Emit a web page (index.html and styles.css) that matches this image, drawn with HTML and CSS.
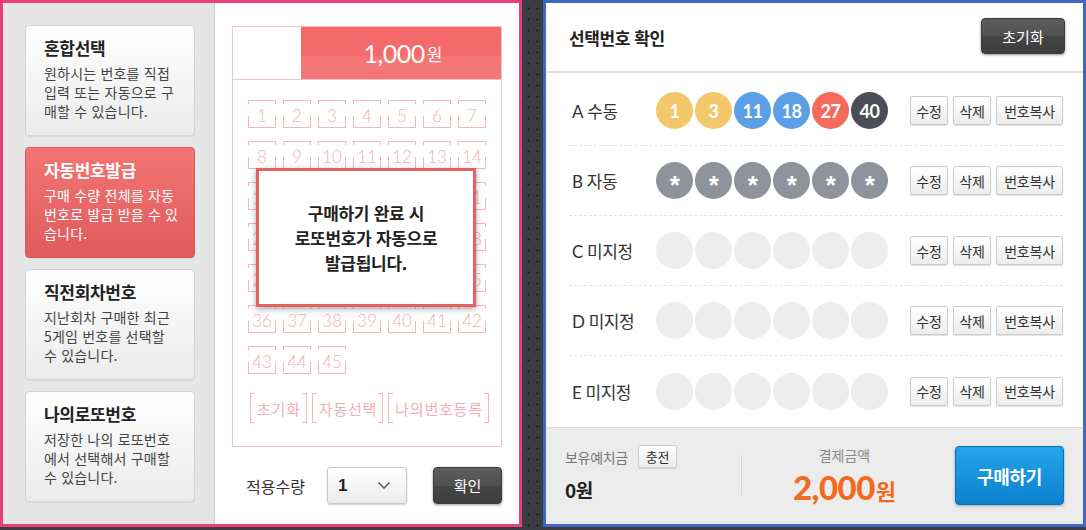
FILE: index.html
```html
<!DOCTYPE html>
<html lang="ko">
<head>
<meta charset="utf-8">
<link rel="stylesheet" href="styles.css">
</head>
<body>
<section class="left">
  <aside class="side">
    <div class="card">
      <h3>혼합선택</h3>
      <p>원하시는 번호를 직접<br>입력 또는 자동으로 구<br>매할 수 있습니다.</p>
    </div>
    <div class="card active">
      <h3>자동번호발급</h3>
      <p>구매 수량 전체를 자동<br>번호로 발급 받을 수 있<br>습니다.</p>
    </div>
    <div class="card">
      <h3>직전회차번호</h3>
      <p>지난회차 구매한 최근<br>5게임 번호를 선택할<br>수 있습니다.</p>
    </div>
    <div class="card">
      <h3>나의로또번호</h3>
      <p>저장한 나의 로또번호<br>에서 선택해서 구매할<br>수 있습니다.</p>
    </div>
  </aside>
  <div class="main">
    <div class="slip">
      <div class="slip-head">
        <div class="slip-blank"></div>
        <div class="price"><span class="pnum">1,000</span><span class="pwon">원</span></div>
      </div>
      <div class="grid">
        <span class="cell">1</span><span class="cell">2</span><span class="cell">3</span><span class="cell">4</span><span class="cell">5</span><span class="cell">6</span><span class="cell">7</span>
        <span class="cell">8</span><span class="cell">9</span><span class="cell">10</span><span class="cell">11</span><span class="cell">12</span><span class="cell">13</span><span class="cell">14</span>
        <span class="cell">15</span><span class="cell">16</span><span class="cell">17</span><span class="cell">18</span><span class="cell">19</span><span class="cell">20</span><span class="cell">21</span>
        <span class="cell">22</span><span class="cell">23</span><span class="cell">24</span><span class="cell">25</span><span class="cell">26</span><span class="cell">27</span><span class="cell">28</span>
        <span class="cell">29</span><span class="cell">30</span><span class="cell">31</span><span class="cell">32</span><span class="cell">33</span><span class="cell">34</span><span class="cell">35</span>
        <span class="cell">36</span><span class="cell">37</span><span class="cell">38</span><span class="cell">39</span><span class="cell">40</span><span class="cell">41</span><span class="cell">42</span>
        <span class="cell">43</span><span class="cell">44</span><span class="cell">45</span>
      </div>
      <div class="slip-btns">
        <span class="bk">초기화</span><span class="bk">자동선택</span><span class="bk">나의번호등록</span>
      </div>
      <div class="notice">구매하기 완료 시<br>로또번호가 자동으로<br>발급됩니다.</div>
    </div>
    <div class="qty">
      <span class="qty-label">적용수량</span>
      <div class="select"><span>1</span>
        <svg width="14" height="9" viewBox="0 0 14 9"><polyline points="1.5,1.5 7,7 12.5,1.5" fill="none" stroke="#666" stroke-width="1.6"/></svg>
      </div>
      <button class="dark-btn ok">확인</button>
    </div>
  </div>
</section>

<section class="right">
  <header class="rhead">
    <h2>선택번호 확인</h2>
    <button class="dark-btn reset">초기화</button>
  </header>
  <div class="rows">
    <div class="row">
      <span class="lbl"><b>A</b> 수동</span>
      <div class="balls">
        <span class="ball y">1</span><span class="ball y">3</span><span class="ball b">11</span><span class="ball b">18</span><span class="ball r">27</span><span class="ball k">40</span>
      </div>
      <div class="acts"><button class="sbtn">수정</button><button class="sbtn">삭제</button><button class="sbtn wide">번호복사</button></div>
    </div>
    <div class="row">
      <span class="lbl"><b>B</b> 자동</span>
      <div class="balls">
        <span class="ball s">*</span><span class="ball s">*</span><span class="ball s">*</span><span class="ball s">*</span><span class="ball s">*</span><span class="ball s">*</span>
      </div>
      <div class="acts"><button class="sbtn">수정</button><button class="sbtn">삭제</button><button class="sbtn wide">번호복사</button></div>
    </div>
    <div class="row">
      <span class="lbl"><b>C</b> 미지정</span>
      <div class="balls">
        <span class="ball e"></span><span class="ball e"></span><span class="ball e"></span><span class="ball e"></span><span class="ball e"></span><span class="ball e"></span>
      </div>
      <div class="acts"><button class="sbtn">수정</button><button class="sbtn">삭제</button><button class="sbtn wide">번호복사</button></div>
    </div>
    <div class="row">
      <span class="lbl"><b>D</b> 미지정</span>
      <div class="balls">
        <span class="ball e"></span><span class="ball e"></span><span class="ball e"></span><span class="ball e"></span><span class="ball e"></span><span class="ball e"></span>
      </div>
      <div class="acts"><button class="sbtn">수정</button><button class="sbtn">삭제</button><button class="sbtn wide">번호복사</button></div>
    </div>
    <div class="row last">
      <span class="lbl"><b>E</b> 미지정</span>
      <div class="balls">
        <span class="ball e"></span><span class="ball e"></span><span class="ball e"></span><span class="ball e"></span><span class="ball e"></span><span class="ball e"></span>
      </div>
      <div class="acts"><button class="sbtn">수정</button><button class="sbtn">삭제</button><button class="sbtn wide">번호복사</button></div>
    </div>
  </div>
  <footer class="rfoot">
    <div class="deposit">
      <div class="dep-top"><span class="dep-label">보유예치금</span><button class="sbtn charge">충전</button></div>
      <div class="dep-val">0원</div>
    </div>
    <div class="vdiv"></div>
    <div class="pay">
      <div class="pay-label">결제금액</div>
      <div class="pay-val"><span class="pay-num">2,000</span><span class="pay-won">원</span></div>
    </div>
    <button class="buy">구매하기</button>
  </footer>
</section>
</body>
</html>
```

FILE: styles.css
```css
* { box-sizing: border-box; }
html, body { margin: 0; padding: 0; }
body {
  width: 1086px;
  height: 530px;
  overflow: hidden;
  display: flex;
  gap: 21px;
  align-items: flex-start;
  background-color: #3a3d41;
  background-image: radial-gradient(circle, #1e2023 0.9px, transparent 1.4px);
  background-size: 9px 11px;
  background-position: 2px 3px;
  font-family: "Noto Sans CJK KR", "Noto Sans", sans-serif;
  color: #333;
}
button { font-family: inherit; cursor: pointer; }

/* ---------- left panel ---------- */
.left {
  width: 522px;
  height: 527px;
  border: 3px solid #ea3f7c;
  background: #fff;
  display: flex;
}
.side {
  width: 212px;
  flex: none;
  background: #e6e6e6;
  border-right: 1px solid #cdcdcd;
  padding: 22px 0 0 22px;
  display: flex;
  flex-direction: column;
  gap: 11px;
}
.card {
  width: 170px;
  height: 111px;
  border: 1px solid #d3d3d3;
  border-radius: 4px;
  background: linear-gradient(#ffffff, #ebebeb);
  box-shadow: 0 1px 1px rgba(0,0,0,0.06);
  padding: 9px 6px 0 18px;
}
.card h3 {
  margin: 0 0 3px;
  font-size: 17px;
  line-height: 26px;
  font-weight: 700;
  color: #222;
  letter-spacing: -0.3px;
}
.card p {
  margin: 0;
  font-size: 14px;
  line-height: 19px;
  color: #444;
  letter-spacing: 0.2px;
  white-space: nowrap;
}
.card.active {
  background: linear-gradient(#f37474, #e05b5b);
  border-color: #d85a5a;
}
.card.active h3, .card.active p { color: #fff; }

.main {
  flex: 1;
  padding: 23px 17px 0 17px;
  display: flex;
  flex-direction: column;
}
.slip {
  position: relative;
  width: 270px;
  height: 421px;
  border: 1px solid #f2c3c3;
}
.slip-head {
  display: flex;
  height: 53px;
  border-bottom: 1px solid #f2c3c3;
}
.slip-blank { width: 68px; }
.price {
  flex: 1;
  background: linear-gradient(#f36868 0, #f36b6b 55%, #f47878 58%, #f47676 100%);
  color: #fff;
  display: flex;
  align-items: center;
  justify-content: center;
  gap: 2px;
  padding-left: 4px;
}
.pnum { font-family: Lato, "Noto Sans", sans-serif; font-size: 25px; font-weight: 400; letter-spacing: -0.5px; }
.pwon { font-size: 17px; }

.grid {
  margin: 20px 0 0 15px;
  display: grid;
  grid-template-columns: repeat(7, 28px);
  column-gap: 7px;
  row-gap: 13px;
}
.cell {
  --c: #f2b8b8;
  width: 28px;
  height: 28px;
  display: flex;
  align-items: center;
  justify-content: center;
  padding-top: 2px;
  font-family: Lato, "Noto Sans", sans-serif;
  font-size: 17px;
  font-weight: 300;
  color: #f1b1b1;
  background:
    linear-gradient(var(--c), var(--c)) left top / 100% 1px no-repeat,
    linear-gradient(var(--c), var(--c)) left bottom / 100% 1px no-repeat,
    linear-gradient(var(--c), var(--c)) left top / 1px 4px no-repeat,
    linear-gradient(var(--c), var(--c)) right top / 1px 4px no-repeat,
    linear-gradient(var(--c), var(--c)) left bottom / 1px 12px no-repeat,
    linear-gradient(var(--c), var(--c)) right bottom / 1px 12px no-repeat;
}
.slip-btns {
  margin: 19px 0 0 17px;
  display: flex;
  gap: 5px;
}
.bk {
  --c: #f2b8b8;
  height: 30px;
  padding: 0 6px 0 7px;
  display: flex;
  align-items: center;
  font-size: 15px;
  color: #f0b0b0;
  letter-spacing: 0.8px;
  background:
    linear-gradient(var(--c), var(--c)) left top / 1px 100% no-repeat,
    linear-gradient(var(--c), var(--c)) right top / 1px 100% no-repeat,
    linear-gradient(var(--c), var(--c)) left top / 5px 1px no-repeat,
    linear-gradient(var(--c), var(--c)) right top / 5px 1px no-repeat,
    linear-gradient(var(--c), var(--c)) left bottom / 5px 1px no-repeat,
    linear-gradient(var(--c), var(--c)) right bottom / 5px 1px no-repeat;
}
.notice {
  position: absolute;
  left: 23px;
  top: 141px;
  width: 220px;
  height: 139px;
  border: 3px solid #e36262;
  background: #fff;
  box-shadow: 0 2px 6px rgba(0,0,0,0.35);
  display: flex;
  align-items: center;
  justify-content: center;
  text-align: center;
  font-size: 17px;
  font-weight: 700;
  line-height: 25px;
  color: #222;
  letter-spacing: -0.3px;
}

.qty {
  margin-top: 20px;
  height: 37px;
  display: flex;
  align-items: center;
}
.qty-label {
  margin-left: 14px;
  font-size: 16px;
  color: #333;
  letter-spacing: 0;
}
.select {
  margin-left: 22px;
  width: 80px;
  height: 37px;
  border: 1px solid #c9c9c9;
  border-radius: 3px;
  background: linear-gradient(#ffffff, #ececec);
  box-shadow: 0 1px 2px rgba(0,0,0,0.2);
  display: flex;
  align-items: center;
  justify-content: space-between;
  padding: 0 15px 0 10px;
}
.select span {
  font-family: "Liberation Sans", Arial, sans-serif;
  font-weight: 700;
  font-size: 17px;
  color: #222;
}
.dark-btn {
  border: 1px solid #3a3a3a;
  border-radius: 4px;
  background: linear-gradient(#5d5d5d 0, #505050 50%, #454545 51%, #3d3d3d 100%);
  color: #fff;
  font-size: 15px;
  box-shadow: 0 1px 3px rgba(0,0,0,0.4);
  padding: 0;
}
.ok {
  margin-left: auto;
  width: 69px;
  height: 37px;
}

/* ---------- right panel ---------- */
.right {
  width: 543px;
  height: 527px;
  border: 3px solid #4266c6;
  background: #fff;
  display: flex;
  flex-direction: column;
}
.rhead {
  height: 70px;
  flex: none;
  border-bottom: 2px solid #dedede;
  display: flex;
  align-items: center;
  justify-content: space-between;
  padding: 0 18px 0 23px;
}
.rhead h2 {
  margin: 0;
  font-size: 17px;
  font-weight: 700;
  color: #222;
  letter-spacing: -0.4px;
}
.reset {
  width: 84px;
  height: 36px;
  margin-top: -2px;
}
.rows {
  padding: 3px 20px 0 23px;
  flex: 1;
}
.row {
  height: 70px;
  display: flex;
  align-items: center;
  border-bottom: 1px dashed #e3e3e3;
}
.row.last { border-bottom: none; }
.lbl {
  width: 87px;
  padding-left: 3px;
  font-size: 17px;
  color: #333;
  letter-spacing: -0.5px;
}
.lbl b {
  font-family: Lato, "Noto Sans", sans-serif;
  font-weight: 400;
}
.balls {
  display: flex;
  gap: 2px;
}
.ball {
  width: 37px;
  height: 37px;
  border-radius: 50%;
  display: flex;
  align-items: center;
  justify-content: center;
  color: #fff;
  font-family: Lato, "Noto Sans", sans-serif;
  font-weight: 700;
  font-size: 18px;
  letter-spacing: -0.5px;
}
.ball.y { background: #f3c86d; }
.ball.b { background: #5b9fe6; }
.ball.r { background: #f46a5b; }
.ball.k { background: #4b4e54; }
.ball.s {
  background: #8e939b;
  font-family: "Liberation Sans", Arial, sans-serif;
  font-size: 26px;
  padding-top: 9px;
}
.ball.e { background: #ededed; }
.acts {
  margin-left: auto;
  display: flex;
  gap: 5px;
}
.sbtn {
  width: 38px;
  height: 29px;
  padding: 0;
  border: 1px solid #cbcbcb;
  border-radius: 2px;
  background: linear-gradient(#ffffff, #ececec);
  box-shadow: 0 1px 1px rgba(0,0,0,0.12);
  font-size: 14px;
  color: #333;
  letter-spacing: -0.2px;
}
.sbtn.wide { width: 67px; }
.rfoot {
  height: 97px;
  flex: none;
  background: #ececec;
  border-top: 1px solid #dcdcdc;
  display: flex;
  align-items: flex-start;
  padding: 0 19px 0 19px;
}
.deposit {
  width: 176px;
  padding-top: 17px;
}
.dep-top {
  display: flex;
  align-items: center;
  gap: 10px;
}
.dep-label {
  font-size: 14px;
  color: #777;
  letter-spacing: -0.3px;
}
.sbtn.charge {
  width: 39px;
  height: 23px;
  font-size: 13px;
}
.dep-val {
  margin-top: 10px;
  font-size: 19px;
  font-weight: 700;
  color: #222;
  line-height: 24px;
  letter-spacing: -0.5px;
}
.vdiv {
  width: 1px;
  height: 40px;
  margin-top: 27px;
  background: #d4d4d4;
}
.pay {
  flex: 1;
  text-align: center;
  padding-top: 16px;
  padding-right: 8px;
}
.pay-label {
  font-size: 14px;
  color: #888;
  line-height: 22px;
}
.pay-val {
  margin-top: 2px;
  color: #f26a21;
  font-weight: 700;
  line-height: 38px;
}
.pay-num {
  font-family: Lato, "Noto Sans", sans-serif;
  font-size: 33px;
  font-weight: 900;
  letter-spacing: -0.5px;
}
.pay-won { font-size: 22px; margin-left: 1px; }
.buy {
  margin-top: 18px;
  width: 109px;
  height: 59px;
  border: 1px solid #0b6fb3;
  border-radius: 4px;
  background: linear-gradient(#25a4ec, #0b81cf);
  color: #fff;
  font-size: 18px;
  font-weight: 700;
  letter-spacing: -0.3px;
  box-shadow: 0 1px 3px rgba(0,0,0,0.3);
}
```
